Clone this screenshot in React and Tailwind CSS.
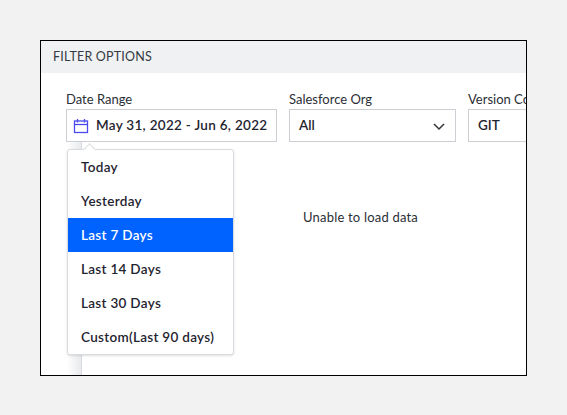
export default function App() {
  const items = ["Today", "Yesterday", "Last 7 Days", "Last 14 Days", "Last 30 Days", "Custom(Last 90 days)"];
  return (
    <div className="w-[567px] h-[415px] bg-[#f2f2f2] pt-[40px] pl-[40px]" style={{ fontFamily: "Lato, 'Noto Sans', sans-serif" }}>
      <div className="w-[487px] h-[336px] border border-black bg-white overflow-hidden flex flex-col relative">
        <div className="h-[32px] bg-[#f0f1f2] flex items-center pl-[12px] text-[12.5px] tracking-[0.2px] text-[#333a44] shrink-0">FILTER OPTIONS</div>
        <div className="flex gap-[12px] pl-[25px] pt-[18px] text-[#2b2f36]">
          <div className="flex flex-col w-[211px] shrink-0">
            <div className="text-[13px] leading-[17px] mb-[1px]">Date Range</div>
            <div className="h-[33px] border border-[#ccd0d5] flex items-center px-[6px] gap-[7px]">
              <svg width="16" height="16" viewBox="0 0 16 16" fill="none" stroke="#4a4af0" strokeWidth="1.3">
                <rect x="1.5" y="3" width="13" height="11.5" />
                <line x1="1.5" y1="6.5" x2="14.5" y2="6.5" />
                <line x1="4.5" y1="1" x2="4.5" y2="4.5" />
                <line x1="11.5" y1="1" x2="11.5" y2="4.5" />
              </svg>
              <span className="text-[13.5px] font-semibold text-[#1f2430] whitespace-nowrap tracking-[0.3px]">May 31, 2022 - Jun 6, 2022</span>
            </div>
          </div>
          <div className="flex flex-col w-[167px] shrink-0">
            <div className="text-[13px] leading-[17px] mb-[1px]">Salesforce Org</div>
            <div className="h-[33px] border border-[#ccd0d5] flex items-center justify-between px-[9px]">
              <span className="text-[13.5px] font-semibold text-[#1f2430]">All</span>
              <svg width="14" height="10" viewBox="0 0 14 10" fill="none" stroke="#333" strokeWidth="1.5"><path d="M2 3l5 5 5-5" /></svg>
            </div>
          </div>
          <div className="flex flex-col w-[120px] shrink-0">
            <div className="text-[13px] leading-[17px] mb-[1px] whitespace-nowrap">Version Control</div>
            <div className="h-[33px] border border-[#ccd0d5] flex items-center px-[9px]">
              <span className="text-[13.5px] font-semibold text-[#1f2430]">GIT</span>
            </div>
          </div>
        </div>
        <div className="flex flex-1">
          <div className="w-[15px] ml-[26px] bg-gradient-to-r from-white to-[#e8eaed] border-r border-[#d8dbe0]" />
          <div className="flex-1 pt-[62px] pl-[221px]">
            <span className="text-[13px] text-[#2b2f36] tracking-[0.2px]">Unable to load data</span>
          </div>
        </div>
        <div className="absolute left-[26px] top-[108px] w-[167px] bg-white border border-[#d8dbe0] rounded-[3px] shadow-sm">
          <div className="absolute -top-[5px] left-[17px] w-[9px] h-[9px] bg-white border-l border-t border-[#d8dbe0] rotate-45" />
          {items.map((t, i) => (
            <div key={t} className={`h-[34px] flex items-center pl-[13px] text-[13.5px] font-semibold tracking-[0.3px] relative ${i === 2 ? "bg-[#0062ff] text-white" : "text-[#1f2430]"}`}>{t}</div>
          ))}
        </div>
      </div>
    </div>
  );
}
